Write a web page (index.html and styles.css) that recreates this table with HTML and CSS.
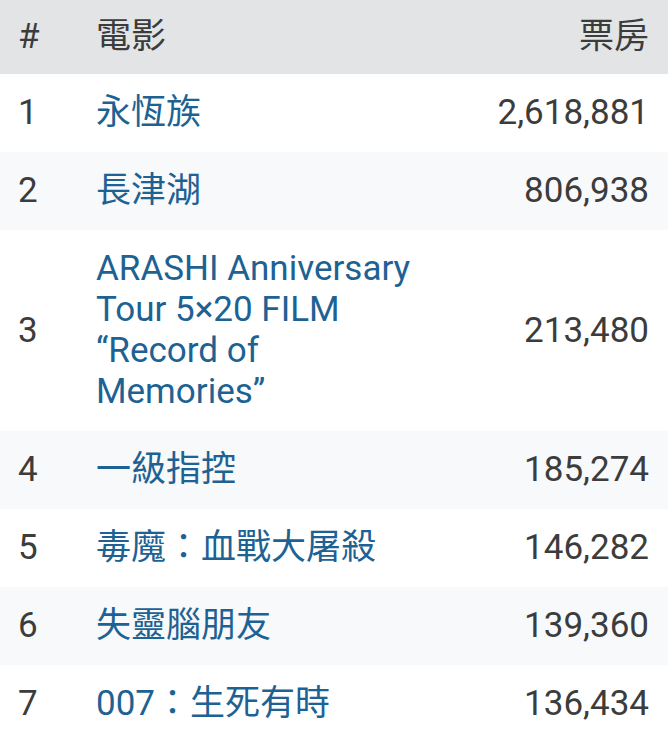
FILE: index.html
```html
<!DOCTYPE html>
<html lang="zh-Hant">
	<head>
		<meta charset="utf-8">
		<title>票房</title>
		<link rel="stylesheet" href="styles.css">
	</head>
	<body>
		<table class="chart">
			<thead>
				<tr>
					<th class="rank">#</th>
					<th class="film">電影</th>
					<th class="gross">票房</th>
				</tr>
			</thead>
			<tbody>
				<tr>
					<td class="rank">1</td>
					<td class="film"><a href="#">永恆族</a></td>
					<td class="gross">2,618,881</td>
				</tr>
				<tr>
					<td class="rank">2</td>
					<td class="film"><a href="#">長津湖</a></td>
					<td class="gross">806,938</td>
				</tr>
				<tr>
					<td class="rank">3</td>
					<td class="film"><a href="#">ARASHI Anniversary Tour 5×20 FILM “Record of Memories”</a></td>
					<td class="gross">213,480</td>
				</tr>
				<tr>
					<td class="rank">4</td>
					<td class="film"><a href="#">一級指控</a></td>
					<td class="gross">185,274</td>
				</tr>
				<tr>
					<td class="rank">5</td>
					<td class="film"><a href="#">毒魔：血戰大屠殺</a></td>
					<td class="gross">146,282</td>
				</tr>
				<tr>
					<td class="rank">6</td>
					<td class="film"><a href="#">失靈腦朋友</a></td>
					<td class="gross">139,360</td>
				</tr>
				<tr>
					<td class="rank">7</td>
					<td class="film"><a href="#">007：生死有時</a></td>
					<td class="gross">136,434</td>
				</tr>
			</tbody>
		</table>
	</body>
</html>
```

FILE: styles.css
```css
body {
	margin: 0;
	background: #ffffff;
	font-family: Roboto, "Noto Sans CJK TC", sans-serif;
	font-size: 35px;
	line-height: 41px;
	color: #3c3c3c;
}

.chart {
	width: 668px;
	border-collapse: collapse;
	table-layout: fixed;
}

.chart th,
.chart td {
	padding: 18px 19px 19px 18px;
	vertical-align: middle;
	text-align: left;
}

.chart th {
	font-weight: normal;
	background: #e3e4e6;
	padding-top: 16px;
	padding-bottom: 17px;
}

.chart tbody tr:nth-child(even) td {
	background: #f8f9fa;
}

.rank {
	width: 41px;
}

.film {
	width: 325px;
}

.gross {
	text-align: right !important;
}

.film a {
	color: #1d6293;
	text-decoration: none;
}
```
